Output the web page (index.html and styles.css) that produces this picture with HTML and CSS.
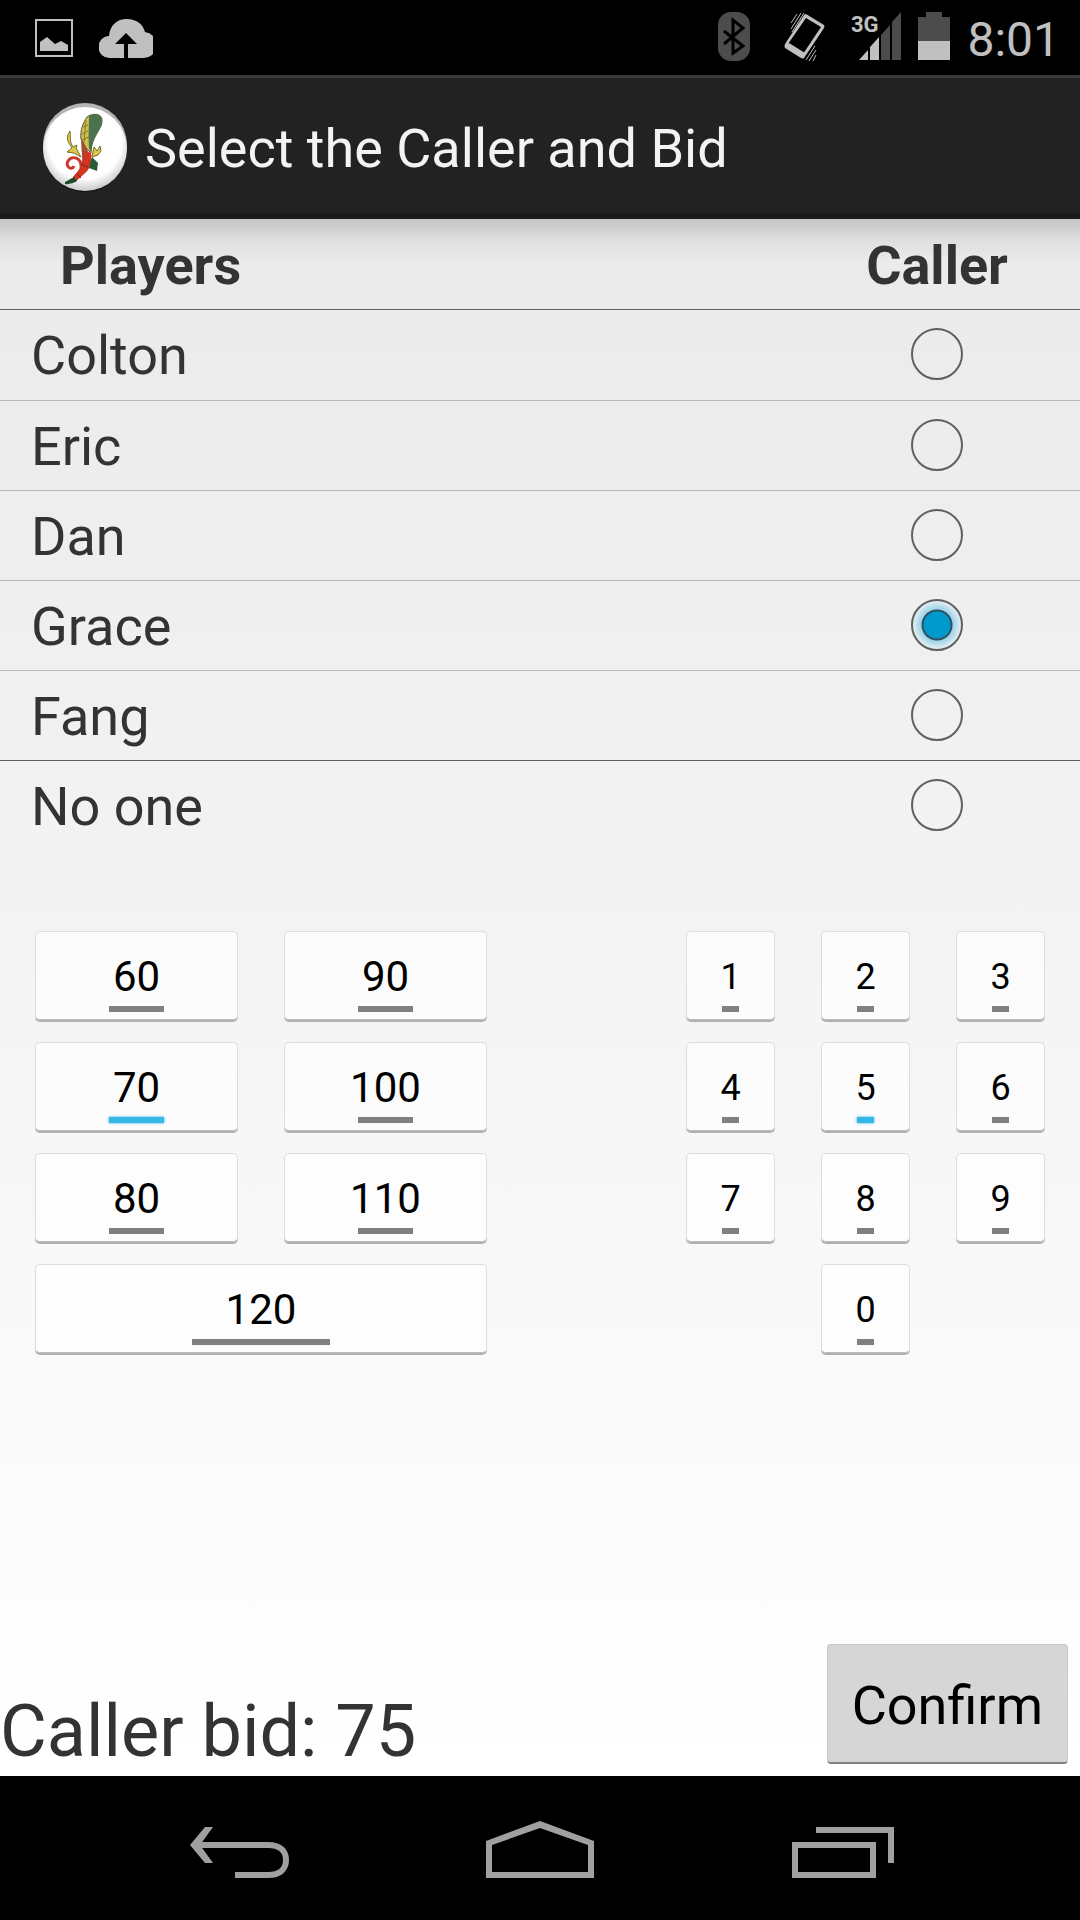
FILE: index.html
```html
<!DOCTYPE html>
<html lang="en">
<head>
<meta charset="utf-8">
<meta name="viewport" content="width=device-width, initial-scale=1">
<title>Select the Caller and Bid</title>
<link rel="stylesheet" href="styles.css">
</head>
<body>
<div class="status-bar">
  <div class="status-group status-notices">
    <svg width="38" height="50" viewBox="0 0 38 50" aria-label="Screenshot saved">
      <rect x="1" y="8" width="36" height="36" fill="none" stroke="#c0c0c0" stroke-width="2"/>
      <path d="M5 39V30L12 25L20 32L26 29L33 33V39Z" fill="#c0c0c0"/>
    </svg>
    <svg width="54" height="50" viewBox="0 0 54 50" aria-label="Upload">
      <path d="M11 46A11 11 0 0 1 10 24C11 13 18 7 28 7C37 7 44 12 46 20A13 13 0 0 1 43 46H29V32H38L27 21L16 32H25V46Z" fill="#c0c0c0"/>
    </svg>
  </div>
  <div class="status-group status-system">
    <svg width="50" height="50" viewBox="0 0 50 50" aria-label="Bluetooth">
      <rect x="9" y="0" width="32" height="49" rx="13" fill="#4c4c4c"/>
      <path d="M15 19L34 34L24 41V8L34 16L15 32" fill="none" stroke="#000" stroke-width="3"/>
    </svg>
    <svg width="58" height="50" viewBox="0 0 58 50" aria-label="Vibrate">
      <path d="M30 2L48 13Q49 14 48 16L28 46Q27 47 25 46L9 36Q8 34 9 32L28 3Q29 2 30 2ZM30 6L12 32L27 42L45 15Z" fill="#c0c0c0" fill-rule="evenodd"/>
      <path d="M10 33L13 31L29 41L26 46Z" fill="#c0c0c0"/>
      <path d="M15 11L21 2M15 17L25 1M16 20L28 1M30 48L39 34M33 49L40 38M37 49L40 43" fill="none" stroke="#c0c0c0" stroke-width="1"/>
    </svg>
    <svg class="signal" width="50" height="50" viewBox="0 0 50 50" aria-label="3G signal">
      <path d="M8 48L17 38V48ZM19 48V35L28 25V48Z" fill="#c0c0c0"/>
      <path d="M30 48V23L39 13V48ZM41 48V10L50 0V48Z" fill="#4c4c4c"/>
      <text class="network-label" x="0" y="20">3G</text>
    </svg>
    <svg width="32" height="50" viewBox="0 0 32 50" aria-label="Battery">
      <path d="M0 29V5H8V0H24V5H32V29Z" fill="#4c4c4c"/>
      <path d="M0 29H32V48H0Z" fill="#c0c0c0"/>
    </svg>
    <time class="clock">8:01</time>
  </div>
</div>

<header class="action-bar">
  <svg class="app-logo" width="84" height="90" viewBox="0 0 84 90" aria-hidden="true">
    <defs>
      <radialGradient id="disc" cx="50%" cy="42%" r="58%">
        <stop offset="0.75" stop-color="#fff"/>
        <stop offset="1" stop-color="#c8c8c8"/>
      </radialGradient>
    </defs>
    <ellipse cx="42" cy="45" rx="42" ry="44" fill="#111"/>
    <ellipse cx="42" cy="42" rx="42" ry="42" fill="#b4b4b4"/>
    <ellipse cx="42" cy="46" rx="42" ry="42" fill="url(#disc)"/>
    <path d="M44 14C49 10 59 10 59 17C60 26 48 33 48 50L43 45L38 36C37 27 40 20 44 14Z" fill="#cfc04e" stroke="#53562f" stroke-width="1"/>
    <path d="M46 13C52 10 59 12 59 18C59 26 50 30 48 49L46 45C45 34 46 24 46 13Z" fill="#4b7350"/>
    <path d="M43 17L41 40M40 24L45 22M39 31L45 28M39 37L46 34" stroke="#85792e" stroke-width="1"/>
    <path d="M38 36L43 45L46 50L48 49C49 60 47 65 43 69L32 79L30 74C37 67 40 60 39 54Z" fill="#a54a36"/>
    <path d="M42 48L48 50C49 60 47 65 43 69L32 79L30 74C37 67 41 60 42 48Z" fill="#d5331f"/>
    <path d="M31 74L34 78Q28 82 22 81V79Z" fill="#1d4d2b"/>
    <path d="M38 65C39 54 29 52 25 58C22 64 29 68 31 63" fill="none" stroke="#c9382b" stroke-width="3"/>
    <path d="M27 28C22 35 25 39 29 45L24 49L31 50L38 54L33 45L34 42L30 44C26 38 28 35 27 28Z" fill="#dccb42" stroke="#77702c" stroke-width="1"/>
    <path d="M49 54L51 44L54 48L57 43L58 48L55 52Z" fill="#dccb42" stroke="#77702c" stroke-width="1"/>
    <path d="M48 57L49 54L55 60L54 68L46 65Z" fill="#285b36"/>
    <path d="M38 61L45 64M34 71L38 75" stroke="#712419" stroke-width="1"/>
  </svg>
  <h1 class="title">Select the Caller and Bid</h1>
</header>

<main class="content">
  <table class="players">
    <thead>
      <tr><th class="name-head" scope="col">Players</th><th class="caller-head" scope="col">Caller</th></tr>
    </thead>
    <tbody>
      <tr class="strong-line"><td><label for="p1">Colton</label></td><td class="pick"><input type="radio" name="caller" id="p1"></td></tr>
      <tr><td><label for="p2">Eric</label></td><td class="pick"><input type="radio" name="caller" id="p2"></td></tr>
      <tr><td><label for="p3">Dan</label></td><td class="pick"><input type="radio" name="caller" id="p3"></td></tr>
      <tr><td><label for="p4">Grace</label></td><td class="pick"><input type="radio" name="caller" id="p4" checked></td></tr>
      <tr><td><label for="p5">Fang</label></td><td class="pick"><input type="radio" name="caller" id="p5"></td></tr>
      <tr class="strong-line"><td><label for="p6">No one</label></td><td class="pick"><input type="radio" name="caller" id="p6"></td></tr>
    </tbody>
  </table>

  <div class="keypads">
    <div class="pad tens">
      <button class="key" type="button" aria-pressed="false">60</button>
      <button class="key" type="button" aria-pressed="false">90</button>
      <button class="key" type="button" aria-pressed="true">70</button>
      <button class="key" type="button" aria-pressed="false">100</button>
      <button class="key" type="button" aria-pressed="false">80</button>
      <button class="key" type="button" aria-pressed="false">110</button>
      <button class="key wide" type="button" aria-pressed="false">120</button>
    </div>
    <div class="pad units">
      <button class="key" type="button" aria-pressed="false">1</button>
      <button class="key" type="button" aria-pressed="false">2</button>
      <button class="key" type="button" aria-pressed="false">3</button>
      <button class="key" type="button" aria-pressed="false">4</button>
      <button class="key" type="button" aria-pressed="true">5</button>
      <button class="key" type="button" aria-pressed="false">6</button>
      <button class="key" type="button" aria-pressed="false">7</button>
      <button class="key" type="button" aria-pressed="false">8</button>
      <button class="key" type="button" aria-pressed="false">9</button>
      <button class="key zero" type="button" aria-pressed="false">0</button>
    </div>
  </div>

  <div class="summary">
    <output class="bid">Caller bid: 75</output>
    <button class="confirm" type="button">Confirm</button>
  </div>
</main>

<nav class="nav-bar">
  <button class="nav-button" type="button" aria-label="Back">
    <svg width="120" height="144" viewBox="0 0 120 144">
      <path d="M10 69L25 51H33L20 69L33 87H25Z" fill="#a0a0a0"/>
      <path d="M17 69H88C100 69 106 75 106 84S100 99 88 99H55" fill="none" stroke="#a0a0a0" stroke-width="6"/>
    </svg>
  </button>
  <button class="nav-button" type="button" aria-label="Home">
    <svg width="120" height="144" viewBox="0 0 120 144">
      <path d="M60 45L114 65V102H6V65ZM60 52L12 69V96H108V69Z" fill="#a0a0a0" fill-rule="evenodd"/>
    </svg>
  </button>
  <button class="nav-button" type="button" aria-label="Recent apps">
    <svg width="120" height="144" viewBox="0 0 120 144">
      <path d="M12 66H96V102H12ZM18 72V96H90V72ZM36 51H114V87H108V57H36Z" fill="#a0a0a0" fill-rule="evenodd"/>
    </svg>
  </button>
</nav>
</body>
</html>
```

FILE: styles.css
```css
* { box-sizing: border-box; }

body {
  margin: 0;
  min-height: 100vh;
  display: flex;
  flex-direction: column;
  background: #000;
  color: #333;
  font-family: Roboto, "Noto Sans", sans-serif;
  font-size: 54px;
  line-height: 64px;
}

button {
  margin: 0;
  font-family: inherit;
  color: #000;
}

/* Status bar */
.status-bar {
  height: 75px;
  padding: 12px 20px 0 35px;
  display: flex;
  justify-content: space-between;
}
.status-group { display: flex; }
.status-notices { gap: 26px; }
.status-system { gap: 17px; }
.signal { overflow: visible; }
.network-label {
  font-size: 22px;
  font-weight: 700;
  fill: #c0c0c0;
}
.clock {
  font-size: 48px;
  line-height: 56px;
  color: #c0c0c0;
}

/* Action bar */
.action-bar {
  height: 144px;
  padding: 4px 0 0 43px;
  display: flex;
  align-items: center;
  gap: 18px;
  background: #222;
  border-top: 3px solid #3a3a3a;
  border-bottom: 6px solid #1b1b1b;
}
.title {
  margin: 0;
  padding-top: 3px;
  font-size: 54px;
  font-weight: 400;
  color: #f3f3f3;
}

/* Content */
.content {
  flex: 1;
  display: flex;
  flex-direction: column;
  background:
    linear-gradient(rgba(0, 0, 0, 0.16), rgba(0, 0, 0, 0.05) 50%, transparent) top / 100% 42px no-repeat,
    linear-gradient(#eaeaea, #fff);
}

.players {
  width: 100%;
  border-spacing: 0;
}
.players th { height: 90px; padding: 3px 0 0; font-weight: 700; }
.players td {
  height: 90px;
  padding: 2px 0 0 31px;
  border-top: 1px solid #b0bcb9;
}
.players tr:first-child td { height: 91px; }
.players .strong-line td { border-top-color: #606060; }
.players .name-head { padding-left: 60px; text-align: left; }
.players .caller-head { width: 286px; }
.players .pick {
  padding: 0 0 2px;
  text-align: center;
  line-height: 0;
}

input[type="radio"] {
  appearance: none;
  width: 52px;
  height: 52px;
  margin: 0;
  vertical-align: middle;
  border: 2px solid #606060;
  border-radius: 50%;
}
input[type="radio"]:checked {
  background: radial-gradient(circle, #0099cc 13px, #30525f 14px, #30525f 15px, #9bd3ea 16px, #e6eef1 24px);
}

/* Keypads */
.keypads {
  display: grid;
  grid-template-columns: 452fr 359fr;
  gap: 199px;
  align-items: start;
  padding: 81px 35px 0;
}
.pad {
  display: grid;
  grid-auto-rows: 89px;
  gap: 22px 46px;
}
.tens { grid-template-columns: repeat(2, 1fr); font-size: 42px; }
.units { grid-template-columns: repeat(3, 1fr); font-size: 36px; }
.wide { grid-column: span 2; }
.zero { grid-column: 2; }

.key {
  display: flex;
  flex-direction: column;
  align-items: center;
  justify-content: flex-end;
  gap: 5px;
  padding: 0 0 7px;
  font-size: inherit;
  line-height: 48px;
  background: rgba(255, 255, 255, 0.7);
  border: 1px solid #ddd;
  border-bottom-color: #bbb;
  border-radius: 5px;
  box-shadow: 0 2px #b0b0b0;
}
.key::after {
  content: "";
  width: calc(33% - 11px);
  height: 6px;
  background: #808080;
}
.key[aria-pressed="true"]::after {
  background: #33b5e5;
  box-shadow: 0 0 3px #33b5e5;
}

/* Bid summary */
.summary {
  margin-top: auto;
  padding: 0 12px 12px 0;
  display: flex;
  align-items: flex-end;
  justify-content: space-between;
}
.bid {
  font-size: 72px;
  line-height: 64px;
}
.confirm {
  height: 120px;
  padding: 4px 24px 0;
  font-size: 54px;
  line-height: 64px;
  background: #d6d6d6;
  border: 1px solid #c8c8c8;
  border-bottom: 2px solid #808080;
  border-radius: 4px;
}

/* Navigation bar */
.nav-bar {
  height: 144px;
  padding: 0 120px;
  display: flex;
  gap: 60px;
}
.nav-button {
  flex: 1;
  padding: 0;
  display: flex;
  justify-content: center;
  background: none;
  border: 0;
}
.nav-bar svg { display: block; }
```
